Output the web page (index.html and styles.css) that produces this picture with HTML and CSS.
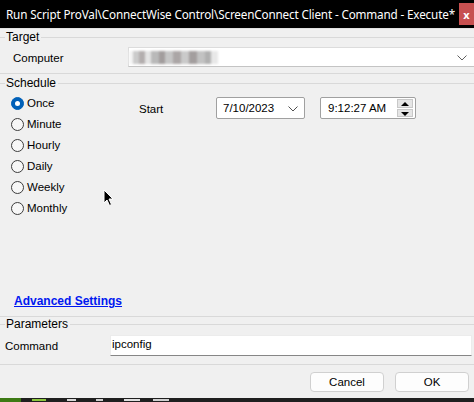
FILE: index.html
```html
<!DOCTYPE html>
<html>
<head>
<meta charset="utf-8">
<link rel="stylesheet" href="styles.css">
</head>
<body>
<div class="window">
  <header class="titlebar">
    <span class="title">Run Script ProVal\ConnectWise Control\ScreenConnect Client - Command - Execute*</span>
    <span class="close">x</span>
  </header>

  <section class="group target">
    <div class="legend"><span>Target</span></div>
    <div class="field-row">
      <label class="field-label">Computer</label>
      <div class="combo">
        <div class="blur"></div>
        <svg class="chev" width="10" height="6" viewBox="0 0 10 6"><polyline points="0.5,0.5 5,5 9.5,0.5" fill="none" stroke="#606060" stroke-width="1"/></svg>
      </div>
    </div>
  </section>

  <section class="group schedule">
    <div class="legend"><span>Schedule</span></div>
    <div class="schedule-body">
      <ul class="radios">
        <li><span class="radio checked"></span>Once</li>
        <li><span class="radio"></span>Minute</li>
        <li><span class="radio"></span>Hourly</li>
        <li><span class="radio"></span>Daily</li>
        <li><span class="radio"></span>Weekly</li>
        <li><span class="radio"></span>Monthly</li>
      </ul>
      <div class="start-row">
        <span class="start-label">Start</span>
        <div class="datebox">
          <span>7/10/2023</span>
          <svg class="chev" width="10" height="6" viewBox="0 0 10 6"><polyline points="0.5,0.5 5,5 9.5,0.5" fill="none" stroke="#505050" stroke-width="1"/></svg>
        </div>
        <div class="timebox">
          <span>9:12:27 AM</span>
          <div class="spinner">
            <span class="spin up"></span>
            <span class="spin down"></span>
          </div>
        </div>
      </div>
    </div>
    <a class="adv" href="#">Advanced Settings</a>
  </section>

  <section class="group params">
    <div class="legend"><span>Parameters</span></div>
    <div class="cmd-row">
      <label class="cmd-label">Command</label>
      <div class="textbox">ipconfig</div>
    </div>
  </section>

  <footer class="buttons">
    <button class="btn">Cancel</button>
    <button class="btn">OK</button>
  </footer>

  <div class="taskbar">
    <span class="tb-start"></span>
    <span class="tb-icon green"></span>
    <span class="tb-icon w1"></span>
    <span class="tb-icon w2"></span>
    <span class="tb-icon w3"></span>
    <span class="tb-icon w4"></span>
  </div>

  <svg class="cursor" width="12" height="19" viewBox="0 0 12 19">
    <path d="M1 1 L1 14 L4 11 L6.5 16.5 L8.5 15.5 L6 10 L10 10 Z" fill="#000" stroke="#fff" stroke-width="1" stroke-linejoin="miter"/>
  </svg>
</div>
</body>
</html>
```

FILE: styles.css
```css
* { box-sizing: border-box; }
html, body { margin: 0; padding: 0; }
body {
  width: 474px;
  height: 402px;
  overflow: hidden;
  background: #f0f0f0;
  font-family: "Liberation Sans", Arial, sans-serif;
  font-size: 11px;
  line-height: 15px;
  color: #000;
}
.window { position: relative; width: 474px; height: 402px; }

.titlebar {
  height: 28px;
  background: #000;
  color: #fff;
  display: flex;
  align-items: flex-start;
  font-family: "Noto Sans", "Open Sans", sans-serif;
  font-size: 11.7px;
}
.title {
  flex: 1;
  min-width: 0;
  overflow: hidden;
  padding: 5px 0 0 6px;
  line-height: 18px;
  white-space: nowrap;
  letter-spacing: -0.15px;
}
.close {
  flex: none;
  margin-top: 3px;
  width: 15px;
  height: 22px;
  background: #c75050;
  color: #fff;
  font-size: 11px;
  font-weight: bold;
  display: flex;
  align-items: center;
  justify-content: center;
}

.group { border-bottom: 1px solid #d9d9d9; }
.target { border-top: 1px solid #e2e2e2; padding-top: 1px; padding-bottom: 6px; }

.legend {
  height: 15px;
  display: flex;
  align-items: center;
  line-height: 15px;
}
.legend::before { content: ""; width: 5px; height: 1px; background: #d9d9d9; }
.legend::after { content: ""; flex: 1; height: 1px; background: #d9d9d9; }
.legend span { padding: 0 2px 0 1px; font-size: 12px; }

.field-row { display: flex; align-items: center; margin-top: 2px; height: 20px; }
.field-label { width: 128px; padding-left: 13px; padding-top: 3px; font-size: 11.5px; }
.combo {
  flex: 1;
  height: 20px;
  margin-right: -2px;
  background: #fff;
  border: 1px solid #dcdcdc;
  border-bottom-color: #c4c4c4;
  display: flex;
  align-items: center;
  position: relative;
}
.combo .chev { position: absolute; right: 8px; top: 7px; }
.blur {
  width: 89px;
  height: 13px;
  margin-top: 1px;
  background:
    linear-gradient(90deg, #f4f4f4 0 4px, #cbcbcb 4px 10px, #b3aeae 10px 16px, #e4e4e4 16px 22px, #b9b9b9 22px 30px, #a29d9d 30px 36px, #c5c5c5 36px 44px, #aba6a6 44px 52px, #cacaca 52px 60px, #a39e9e 60px 68px, #c2c2c2 68px 76px, #b0b0b0 76px 82px, #e8e8e8 82px 89px);
  filter: blur(0.8px);
}

.schedule .legend { margin-top: 2px; }
.schedule { padding-bottom: 7px; }
.schedule-body { display: flex; height: 202px; padding-top: 2px; }
.radios { list-style: none; margin: 0; padding: 0 0 0 11px; width: 139px; }
.radios li { height: 21px; display: flex; align-items: center; gap: 3px; font-size: 11.5px; }
.radio {
  width: 13px;
  height: 13px;
  border-radius: 50%;
  border: 1px solid #3c3c3c;
  background: #f7f7f7;
  position: relative;
  flex: none;
}
.radio.checked { background: #0060b8; border-color: #0060b8; }
.radio.checked::after {
  content: "";
  position: absolute;
  left: 3px; top: 3px;
  width: 5px; height: 5px;
  border-radius: 50%;
  background: #fff;
}

.start-row { display: flex; align-items: center; height: 22px; margin-top: 4px; }
.start-label { width: 77px; padding-top: 3px; font-size: 11.5px; }
.datebox, .timebox {
  height: 22px;
  background: #fff;
  border: 1px solid #a0a0a0;
  border-radius: 2px;
  display: flex;
  align-items: center;
  position: relative;
  font-size: 11.5px;
}
.datebox { width: 89px; padding-left: 6px; }
.datebox .chev { position: absolute; right: 6px; top: 8px; }
.timebox { width: 96px; margin-left: 15px; padding-left: 7px; }
.spinner {
  position: absolute;
  right: 2px;
  top: 1px;
  width: 16px;
  height: 18px;
  display: flex;
  flex-direction: column;
  gap: 1px;
}
.spin {
  flex: 1;
  background: #e5e5e5;
  border: 1px solid #c8c8c8;
  position: relative;
}
.spin::after {
  content: "";
  position: absolute;
  left: 3px;
  border-left: 4px solid transparent;
  border-right: 4px solid transparent;
}
.spin.up::after { top: 2px; border-bottom: 4px solid #000; }
.spin.down::after { top: 2px; border-top: 4px solid #000; }

.adv {
  display: block;
  width: max-content;
  margin-left: 14px;
  height: 16px;
  line-height: 16px;
  font-size: 12px;
  color: #0018f0;
  font-weight: bold;
  text-decoration: underline;
}

.params { padding-bottom: 8px; }
.cmd-row { display: flex; align-items: center; margin-top: 3px; height: 21px; }
.cmd-label { width: 110px; padding-left: 5px; padding-top: 2px; font-size: 11.5px; }
.textbox {
  flex: 1;
  margin-right: 2px;
  height: 21px;
  background: #fff;
  border: 1px solid #ececec;
  border-bottom: 1px solid #868686;
  padding-left: 1px;
  line-height: 17px;
  font-size: 11.5px;
}

.buttons {
  display: flex;
  justify-content: flex-end;
  gap: 11px;
  padding-right: 5px;
  margin-top: 7px;
}
.btn {
  width: 74px;
  height: 20px;
  background: #fdfdfd;
  border: 1px solid #d0d0d0;
  border-radius: 4px;
  font-family: inherit;
  font-size: 11.5px;
  color: #000;
  padding: 0;
  line-height: 18px;
}

.taskbar {
  margin-top: 6px;
  height: 6px;
  background: #1f1f1f;
  display: flex;
  align-items: flex-start;
}
.tb-start { width: 21px; height: 6px; background: #3d7a14; }
.tb-icon { height: 2px; margin-top: 1px; }
.tb-icon.green { width: 14px; margin-left: 11px; background: #8cc63f; }
.tb-icon.w1 { width: 9px; margin-left: 21px; background: #d8d8d8; }
.tb-icon.w2 { width: 7px; margin-left: 20px; background: #cfcfcf; }
.tb-icon.w3 { width: 16px; margin-left: 21px; background: #e0e0e0; }
.tb-icon.w4 { width: 16px; margin-left: 13px; background: #d0d0d0; }

.cursor { position: absolute; left: 103px; top: 189px; }
```
